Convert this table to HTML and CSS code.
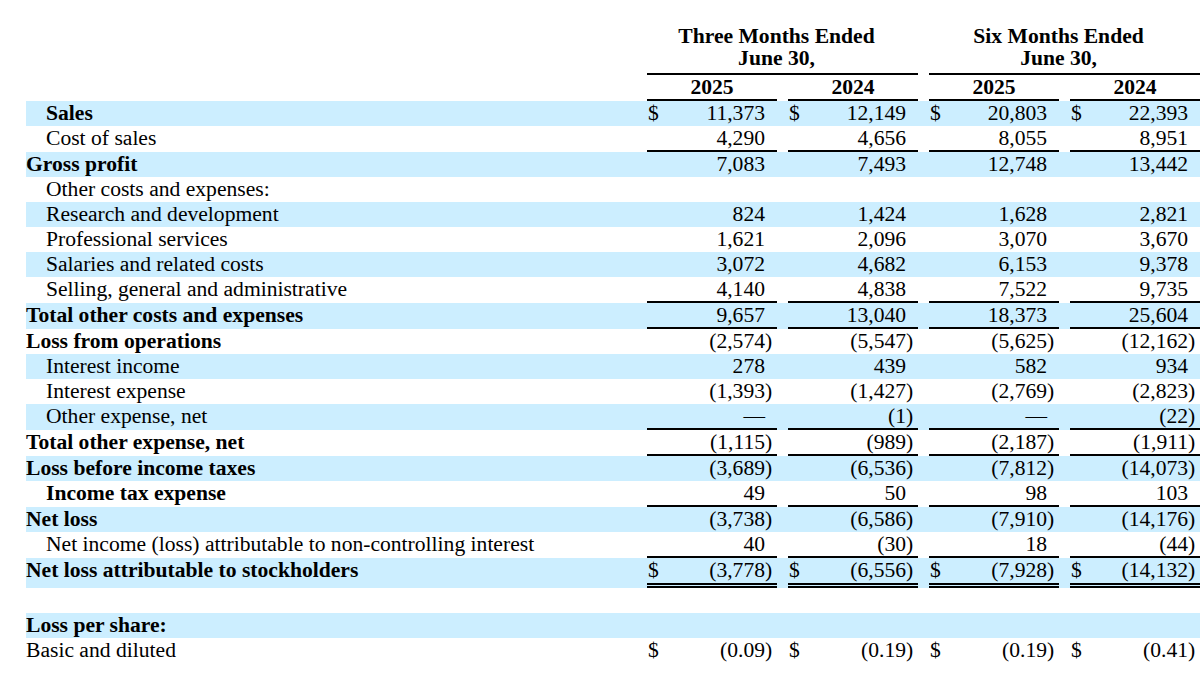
FILE: index.html
```html
<!DOCTYPE html>
<html lang="en">
<head>
<meta charset="utf-8">
<title>Condensed Consolidated Statements of Operations</title>
<link rel="stylesheet" href="styles.css">
</head>
<body>
<table class="fin">
  <colgroup>
    <col class="c-label"><col class="c-val"><col class="c-gap"><col class="c-val"><col class="c-gap"><col class="c-val"><col class="c-gap"><col class="c-val">
  </colgroup>
  <thead>
    <tr>
      <th></th>
      <th colspan="3" class="period">Three Months Ended<br>June 30,</th>
      <th></th>
      <th colspan="3" class="period">Six Months Ended<br>June 30,</th>
    </tr>
    <tr>
      <th></th>
      <th class="yr">2025</th><th></th><th class="yr">2024</th><th></th><th class="yr">2025</th><th></th><th class="yr">2024</th>
    </tr>
  </thead>
  <tbody>
    <tr class="hl">
      <td class="lbl ind b">Sales</td>
      <td class="v"><span class="cur">$</span>11,373</td><td></td>
      <td class="v"><span class="cur">$</span>12,149</td><td></td>
      <td class="v"><span class="cur">$</span>20,803</td><td></td>
      <td class="v"><span class="cur">$</span>22,393</td>
    </tr>
    <tr class="ul">
      <td class="lbl ind">Cost of sales</td>
      <td class="v">4,290</td><td></td>
      <td class="v">4,656</td><td></td>
      <td class="v">8,055</td><td></td>
      <td class="v">8,951</td>
    </tr>
    <tr class="hl">
      <td class="lbl b">Gross profit</td>
      <td class="v">7,083</td><td></td>
      <td class="v">7,493</td><td></td>
      <td class="v">12,748</td><td></td>
      <td class="v">13,442</td>
    </tr>
    <tr>
      <td class="lbl ind">Other costs and expenses:</td>
      <td class="v"></td><td></td><td class="v"></td><td></td><td class="v"></td><td></td><td class="v"></td>
    </tr>
    <tr class="hl">
      <td class="lbl ind">Research and development</td>
      <td class="v">824</td><td></td>
      <td class="v">1,424</td><td></td>
      <td class="v">1,628</td><td></td>
      <td class="v">2,821</td>
    </tr>
    <tr>
      <td class="lbl ind">Professional services</td>
      <td class="v">1,621</td><td></td>
      <td class="v">2,096</td><td></td>
      <td class="v">3,070</td><td></td>
      <td class="v">3,670</td>
    </tr>
    <tr class="hl">
      <td class="lbl ind">Salaries and related costs</td>
      <td class="v">3,072</td><td></td>
      <td class="v">4,682</td><td></td>
      <td class="v">6,153</td><td></td>
      <td class="v">9,378</td>
    </tr>
    <tr class="ul">
      <td class="lbl ind">Selling, general and administrative</td>
      <td class="v">4,140</td><td></td>
      <td class="v">4,838</td><td></td>
      <td class="v">7,522</td><td></td>
      <td class="v">9,735</td>
    </tr>
    <tr class="hl ul">
      <td class="lbl b">Total other costs and expenses</td>
      <td class="v">9,657</td><td></td>
      <td class="v">13,040</td><td></td>
      <td class="v">18,373</td><td></td>
      <td class="v">25,604</td>
    </tr>
    <tr>
      <td class="lbl b">Loss from operations</td>
      <td class="v">(2,574<span class="rp">)</span></td><td></td>
      <td class="v">(5,547<span class="rp">)</span></td><td></td>
      <td class="v">(5,625<span class="rp">)</span></td><td></td>
      <td class="v">(12,162<span class="rp">)</span></td>
    </tr>
    <tr class="hl">
      <td class="lbl ind">Interest income</td>
      <td class="v">278</td><td></td>
      <td class="v">439</td><td></td>
      <td class="v">582</td><td></td>
      <td class="v">934</td>
    </tr>
    <tr>
      <td class="lbl ind">Interest expense</td>
      <td class="v">(1,393<span class="rp">)</span></td><td></td>
      <td class="v">(1,427<span class="rp">)</span></td><td></td>
      <td class="v">(2,769<span class="rp">)</span></td><td></td>
      <td class="v">(2,823<span class="rp">)</span></td>
    </tr>
    <tr class="hl ul">
      <td class="lbl ind">Other expense, net</td>
      <td class="v">—</td><td></td>
      <td class="v">(1<span class="rp">)</span></td><td></td>
      <td class="v">—</td><td></td>
      <td class="v">(22<span class="rp">)</span></td>
    </tr>
    <tr class="ul">
      <td class="lbl b">Total other expense, net</td>
      <td class="v">(1,115<span class="rp">)</span></td><td></td>
      <td class="v">(989<span class="rp">)</span></td><td></td>
      <td class="v">(2,187<span class="rp">)</span></td><td></td>
      <td class="v">(1,911<span class="rp">)</span></td>
    </tr>
    <tr class="hl">
      <td class="lbl b">Loss before income taxes</td>
      <td class="v">(3,689<span class="rp">)</span></td><td></td>
      <td class="v">(6,536<span class="rp">)</span></td><td></td>
      <td class="v">(7,812<span class="rp">)</span></td><td></td>
      <td class="v">(14,073<span class="rp">)</span></td>
    </tr>
    <tr class="ul">
      <td class="lbl ind b">Income tax expense</td>
      <td class="v">49</td><td></td>
      <td class="v">50</td><td></td>
      <td class="v">98</td><td></td>
      <td class="v">103</td>
    </tr>
    <tr class="hl">
      <td class="lbl b">Net loss</td>
      <td class="v">(3,738<span class="rp">)</span></td><td></td>
      <td class="v">(6,586<span class="rp">)</span></td><td></td>
      <td class="v">(7,910<span class="rp">)</span></td><td></td>
      <td class="v">(14,176<span class="rp">)</span></td>
    </tr>
    <tr class="ul">
      <td class="lbl ind">Net income (loss) attributable to non-controlling interest</td>
      <td class="v">40</td><td></td>
      <td class="v">(30<span class="rp">)</span></td><td></td>
      <td class="v">18</td><td></td>
      <td class="v">(44<span class="rp">)</span></td>
    </tr>
    <tr class="hl dbl">
      <td class="lbl b">Net loss attributable to stockholders</td>
      <td class="v"><span class="cur">$</span>(3,778<span class="rp">)</span></td><td></td>
      <td class="v"><span class="cur">$</span>(6,556<span class="rp">)</span></td><td></td>
      <td class="v"><span class="cur">$</span>(7,928<span class="rp">)</span></td><td></td>
      <td class="v"><span class="cur">$</span>(14,132<span class="rp">)</span></td>
    </tr>
    <tr class="blank">
      <td class="lbl"></td>
      <td class="v"></td><td></td><td class="v"></td><td></td><td class="v"></td><td></td><td class="v"></td>
    </tr>
    <tr class="hl">
      <td class="lbl b">Loss per share:</td>
      <td class="v"></td><td></td><td class="v"></td><td></td><td class="v"></td><td></td><td class="v"></td>
    </tr>
    <tr>
      <td class="lbl">Basic and diluted</td>
      <td class="v"><span class="cur">$</span>(0.09<span class="rp">)</span></td><td></td>
      <td class="v"><span class="cur">$</span>(0.19<span class="rp">)</span></td><td></td>
      <td class="v"><span class="cur">$</span>(0.19<span class="rp">)</span></td><td></td>
      <td class="v"><span class="cur">$</span>(0.41<span class="rp">)</span></td>
    </tr>
  </tbody>
</table>
</body>
</html>
```

FILE: styles.css
```css
html, body {
  margin: 0;
  background: #ffffff;
}

body {
  padding: 25px 0 0 26px;
  font-family: "Liberation Serif", "Times New Roman", serif;
  font-size: 21.6px;
  color: #000000;
}

.fin {
  border-collapse: separate;
  border-spacing: 0;
  table-layout: fixed;
  width: 1174px;
}

.c-label { width: 621px; }
.c-val { width: 130px; }
.c-gap { width: 11px; }

.fin th,
.fin td {
  padding: 0;
  white-space: nowrap;
}

.fin .period {
  text-align: center;
  font-weight: bold;
  line-height: 22px;
  padding: 0 12px 4px 0;
  vertical-align: bottom;
  border-bottom: 2px solid #000000;
}

.fin .yr {
  text-align: center;
  font-weight: bold;
  line-height: 24px;
  vertical-align: top;
  border-bottom: 2px solid #000000;
}

.fin td {
  line-height: 25px;
  vertical-align: top;
}

.lbl {
  text-align: left;
}

.fin .ind {
  padding-left: 20px;
}

.b {
  font-weight: bold;
}

.fin .v {
  text-align: right;
  padding: 0 12px 0 1px;
}

.cur {
  float: left;
}

.rp {
  display: inline-block;
  width: 0;
}

.hl td {
  background: #cceeff;
}

.fin .ul .v {
  line-height: 24px;
  border-bottom: 2px solid #000000;
}

.fin .dbl .v {
  border-bottom: 5px double #000000;
}

.fin .blank td {
  height: 25px;
}
```
